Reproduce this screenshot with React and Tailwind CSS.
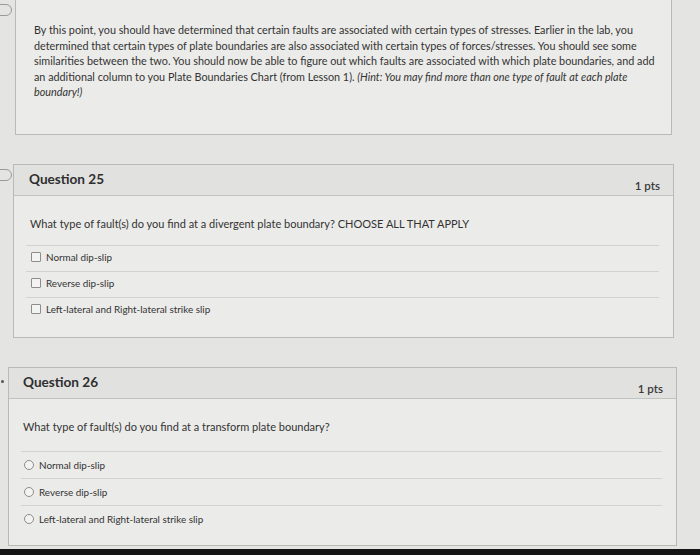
const lato = "font-['Lato','Liberation_Sans',sans-serif]";

function Flag({ top }) {
  return (
    <div className="relative w-0">
      <div
        className="absolute left-[-8px] h-[12px] w-[20px] rounded-full border border-[#9a9a98]"
        style={{ top }}
      />
    </div>
  );
}

function Question({ title, prompt, options, kind, ml, width, height, pad, headerText, rowH, rowPb, promptPb }) {
  return (
    <div className="flex" style={{ marginLeft: ml }}>
      <section
        className="flex flex-col border border-[#b9b9b7] bg-[#ebebe9]"
        style={{ width, height }}
      >
        <header
          className="flex h-[31px] shrink-0 items-start justify-between border-b border-[#c2c2c0] bg-[#e1e1df] pr-[13px]"
          style={{ paddingLeft: headerText }}
        >
          <h3 className="pt-[4px] text-[13.6px] font-bold text-[#2f2f2f]">{title}</h3>
          <span className="pt-[12px] text-[11.5px] font-semibold text-[#3a3a3a]">1 pts</span>
        </header>
        <div className="flex flex-col pl-[12px] pr-[14px] pt-[20px]">
          <p
            className="whitespace-nowrap text-[11px] leading-[16px] text-[#333]"
            style={{ paddingLeft: pad, paddingBottom: promptPb }}
          >
            {prompt}
          </p>
          {options.map((o) => (
            <div
              key={o}
              className="flex items-center gap-[5px] border-t border-[#d2d2d0]"
              style={{ paddingLeft: pad + 1, height: rowH, paddingBottom: rowPb }}
            >
              {kind === "check" ? (
                <span className="h-[10px] w-[10px] rounded-[1px] border border-[#8d8d8b] bg-[#f3f3f1]" />
              ) : (
                <span className="h-[10px] w-[10px] rounded-full border border-[#8d8d8b] bg-[#f3f3f1]" />
              )}
              <span className="text-[9.9px] text-[#333]">{o}</span>
            </div>
          ))}
        </div>
      </section>
    </div>
  );
}

const faultOptions = [
  "Normal dip-slip",
  "Reverse dip-slip",
  "Left-lateral and Right-lateral strike slip",
];

export default function App() {
  return (
    <div className={`${lato} flex h-[555px] w-[700px] flex-col overflow-hidden bg-[#e4e4e2]`}>
      <div className="flex">
        <Flag top={4} />
        <div className="ml-[15px] mt-[-2px] h-[137px] w-[657px] border border-[#b9b9b7] bg-[#ebebe9] pl-[18px] pt-[23px]">
          <p className="whitespace-nowrap text-[10.8px] leading-[15.5px] text-[#333]">
            By this point, you should have determined that certain faults are associated with certain types of stresses. Earlier in the lab, you
            <br />
            determined that certain types of plate boundaries are also associated with certain types of forces/stresses. You should see some
            <br />
            similarities between the two. You should now be able to figure out which faults are associated with which plate boundaries, and add
            <br />
            an additional column to you Plate Boundaries Chart (from Lesson 1).{" "}
            <em>
              (Hint: You may find more than one type of fault at each plate
              <br />
              boundary!)
            </em>
          </p>
        </div>
      </div>

      <div className="mt-[29px] flex">
        <Flag top={5} />
        <Question
          title="Question 25"
          prompt="What type of fault(s) do you find at a divergent plate boundary? CHOOSE ALL THAT APPLY"
          options={faultOptions}
          kind="check"
          ml={13}
          width={661}
          height={174}
          pad={4}
          headerText={15}
          rowH={26}
          rowPb={3}
          promptPb={13}
        />
      </div>

      <div className="mt-[29px] flex">
        <div className="relative w-0">
          <div className="absolute left-[1px] top-[13px] h-[3px] w-[3px] rounded-full bg-[#555]" />
        </div>
        <Question
          title="Question 26"
          prompt="What type of fault(s) do you find at a transform plate boundary?"
          options={faultOptions}
          kind="radio"
          ml={8}
          width={669}
          height={179}
          pad={2}
          headerText={14}
          rowH={27}
          rowPb={0}
          promptPb={16}
        />
      </div>

      <div className="mt-auto h-[6px] bg-[#151515]" />
    </div>
  );
}
